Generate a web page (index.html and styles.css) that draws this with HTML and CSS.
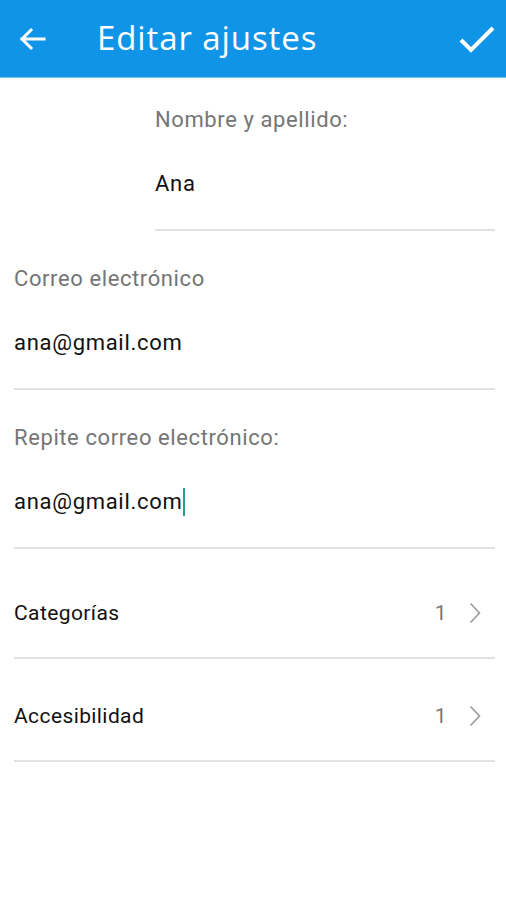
FILE: index.html
```html
<!DOCTYPE html>
<html lang="es">

<head>
    <meta charset="UTF-8">
    <meta name="viewport" content="width=device-width, initial-scale=1.0">
    <title>Editar ajustes</title>
    <link rel="stylesheet" href="styles.css">
</head>

<body>
    <header class="toolbar">
        <svg class="toolbar-back" width="28" height="24" viewBox="0 0 28 24">
            <path d="M26 12H4M13 3L4 12l9 9" fill="none" stroke="#fff" stroke-width="3" stroke-linecap="square"/>
        </svg>
        <h1 class="toolbar-title">Editar ajustes</h1>
        <svg class="toolbar-ok" width="38" height="28" viewBox="0 0 38 28">
            <path d="M3 15l10 10L35 3" fill="none" stroke="#fff" stroke-width="4"/>
        </svg>
    </header>

    <div class="form">
        <div class="field field-name">
            <div class="field-label">Nombre y apellido:</div>
            <div class="field-value">Ana</div>
        </div>
        <div class="field">
            <div class="field-label">Correo electrónico</div>
            <div class="field-value">ana@gmail.com</div>
        </div>
        <div class="field">
            <div class="field-label">Repite correo electrónico:</div>
            <div class="field-value">ana@gmail.com<span class="cursor"></span></div>
        </div>

        <ul class="list">
            <li class="row">
                <span class="row-title">Categorías</span>
                <span class="row-count">1</span>
                <svg class="chevron" width="12" height="22" viewBox="0 0 12 22">
                    <path d="M1.5 1.5L10.5 11l-9 9.5" fill="none" stroke="#9a9a9a" stroke-width="1.6"/>
                </svg>
            </li>
            <li class="row">
                <span class="row-title">Accesibilidad</span>
                <span class="row-count">1</span>
                <svg class="chevron" width="12" height="22" viewBox="0 0 12 22">
                    <path d="M1.5 1.5L10.5 11l-9 9.5" fill="none" stroke="#9a9a9a" stroke-width="1.6"/>
                </svg>
            </li>
        </ul>
    </div>
</body>

</html>
```

FILE: styles.css
```css
* {
    margin: 0;
    padding: 0;
    box-sizing: border-box;
}
body {
    background-color: #fff;
    font-family: Roboto, "Noto Sans", sans-serif;
    color: #212121;
}

/* barra superior */
.toolbar {
    display: flex;
    align-items: center;
    height: 78px;
    background-color: #0f94e8;
    border-bottom: 1px solid #7cc3f2;
    padding: 0 10px 0 18px;
}
.toolbar-back {
    flex: none;
}
.toolbar-title {
    flex: 1;
    margin-left: 51px;
    font-family: "Open Sans", Lato, sans-serif;
    font-weight: 400;
    font-size: 33px;
    letter-spacing: 0.9px;
    color: #fff;
    margin-top: -2px;
}
.toolbar-ok {
    flex: none;
}

/* campos */
.form {
    padding: 0 11px 0 14px;
}
.field {
    padding: 36px 0 33px;
    border-bottom: 2px solid #e2e2e2;
}
.field-name {
    margin-left: 141px;
    padding-top: 30px;
}
.field-label {
    font-size: 22px;
    line-height: 24px;
    letter-spacing: 0.6px;
    color: #757575;
}
.field-value {
    margin-top: 40px;
    height: 24px;
    font-size: 22px;
    line-height: 24px;
    letter-spacing: 0.7px;
    color: #111;
    display: flex;
    align-items: center;
}
.cursor {
    flex: none;
    width: 2px;
    height: 28px;
    margin-left: 1px;
    background-color: #1fa08f;
}

/* lista */
.list {
    list-style: none;
    margin-top: 7px;
}
.row {
    display: flex;
    align-items: center;
    padding: 45px 14px 32px 0;
    border-bottom: 2px solid #e2e2e2;
    font-size: 21px;
    line-height: 24px;
    letter-spacing: 0.4px;
}
.row-title {
    flex: 1;
    color: #111;
}
.row-count {
    color: #777;
    margin-right: 22px;
}
```
